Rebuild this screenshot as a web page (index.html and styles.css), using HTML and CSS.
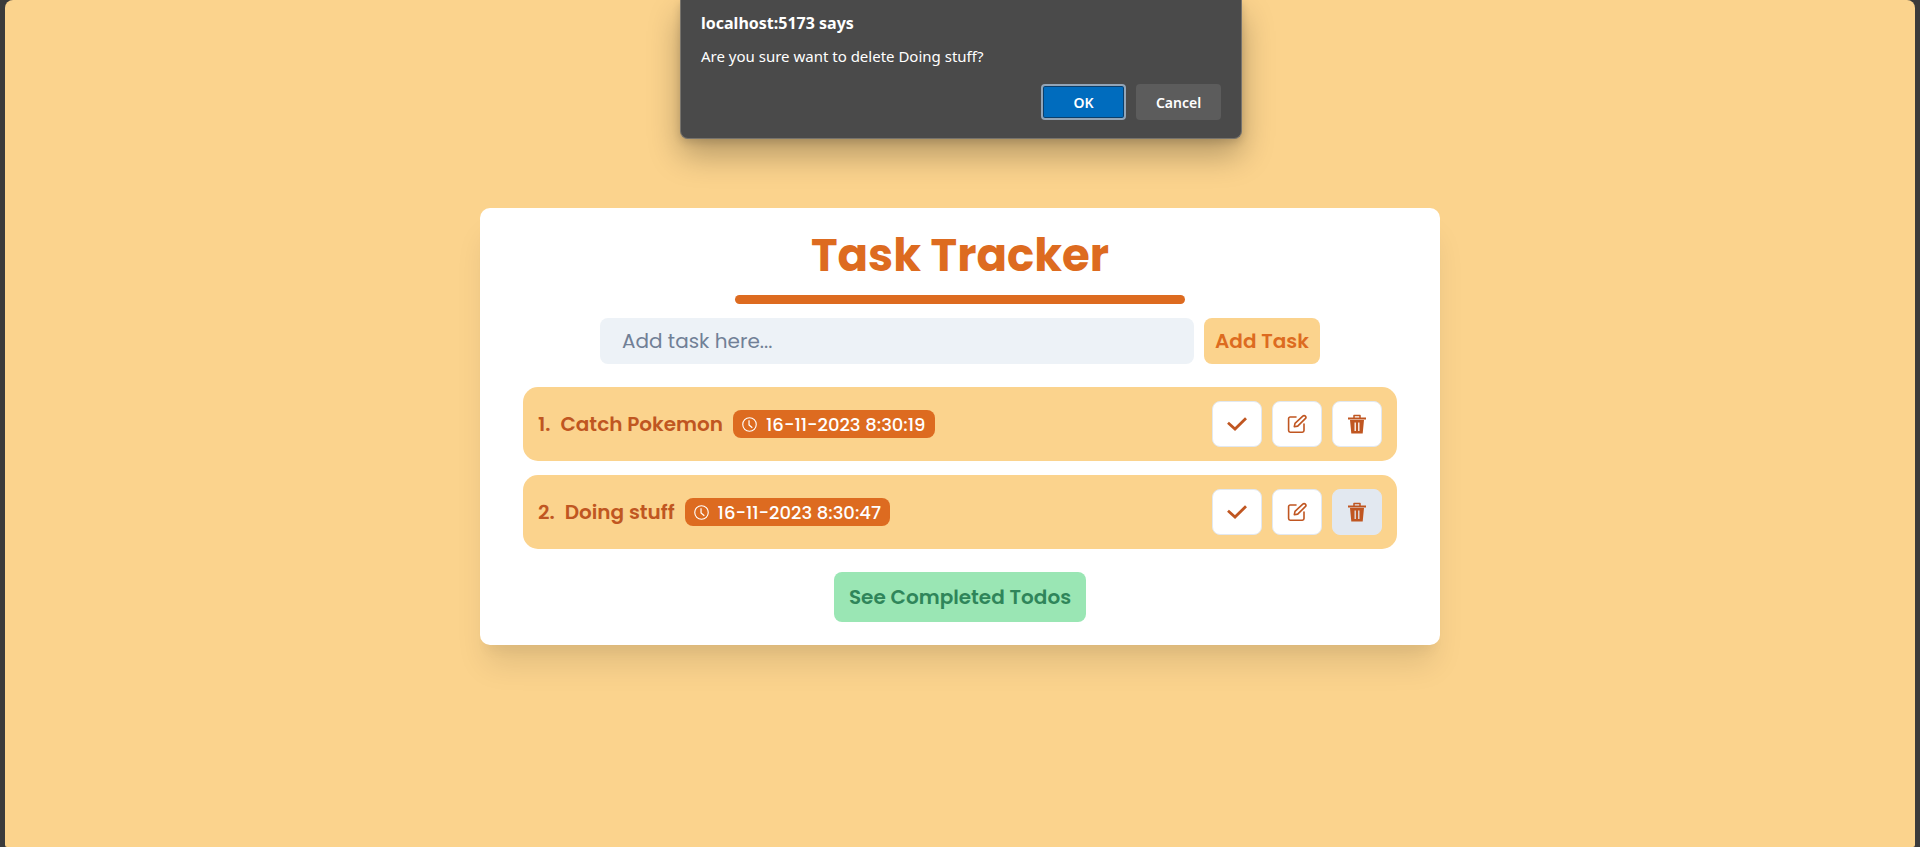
FILE: index.html
```html
<!DOCTYPE html>
<html lang="en">
<head>
<meta charset="utf-8">
<meta name="viewport" content="width=device-width, initial-scale=1">
<title>Task Tracker</title>
<link rel="stylesheet" href="styles.css">
</head>
<body>
<svg class="sprite" aria-hidden="true">
  <symbol id="check" viewBox="0 0 20 20"><path d="M1 8.800 8 15 19 4.300" fill="none" stroke="currentColor" stroke-width="2.800"/></symbol>
  <symbol id="edit" viewBox="0 0 20 20"><path d="M9 3H3.200a1.600 1.600 0 0 0-1.600 1.600V16.600a1.600 1.600 0 0 0 1.600 1.600H15.400a1.600 1.600 0 0 0 1.600-1.600V10M7.300 12.700l.7-3.400 7.800-7.200a1.800 1.800 0 0 1 2.500 2.600l-7.600 7.400Z" fill="none" stroke="currentColor" stroke-width="1.600" stroke-linejoin="round" stroke-linecap="round"/></symbol>
  <symbol id="trash" viewBox="0 0 20 20"><path d="M1 3.500h18v2H1zM3 6h14l-1.300 13.500H4.300z" fill="currentColor"/><path d="M7 4V1.500h6V4" fill="none" stroke="currentColor" stroke-width="1.500" stroke-linejoin="round"/><path d="M8.200 8.500V17M11.800 8.500V17" stroke="var(--hole)" stroke-width="1.300"/></symbol>
  <symbol id="clock" viewBox="0 0 16 16"><circle cx="8" cy="8" r="7.200" fill="none" stroke="currentColor" stroke-width="1.200"/><path d="M7.500 3.500V8.500L11 11.500" fill="none" stroke="currentColor" stroke-width="1.300"/></symbol>
</svg>
<div class="page">
  <main class="card">
    <h1 class="title">Task Tracker</h1>
    <div class="rule"></div>
    <form class="form">
      <input class="field" type="text" placeholder="Add task here..." aria-label="New task">
      <button class="add" type="button">Add Task</button>
    </form>
    <ul class="tasks">
      <li class="task">
        <span class="number">1.</span>
        <span class="name">Catch Pokemon</span>
        <time class="stamp"><svg class="clock"><use href="#clock"/></svg>16-11-2023 8:30:19</time>
        <div class="actions">
          <button class="action" type="button" aria-label="Complete Catch Pokemon"><svg class="icon"><use href="#check"/></svg></button>
          <button class="action" type="button" aria-label="Edit Catch Pokemon"><svg class="icon"><use href="#edit"/></svg></button>
          <button class="action" type="button" aria-label="Delete Catch Pokemon"><svg class="icon"><use href="#trash"/></svg></button>
        </div>
      </li>
      <li class="task">
        <span class="number">2.</span>
        <span class="name">Doing stuff</span>
        <time class="stamp"><svg class="clock"><use href="#clock"/></svg>16-11-2023 8:30:47</time>
        <div class="actions">
          <button class="action" type="button" aria-label="Complete Doing stuff"><svg class="icon"><use href="#check"/></svg></button>
          <button class="action" type="button" aria-label="Edit Doing stuff"><svg class="icon"><use href="#edit"/></svg></button>
          <button class="action active" type="button" aria-label="Delete Doing stuff"><svg class="icon"><use href="#trash"/></svg></button>
        </div>
      </li>
    </ul>
    <button class="completed" type="button">See Completed Todos</button>
  </main>
</div>
<div class="dialog" role="alertdialog" aria-labelledby="dialog-title" aria-describedby="dialog-text">
  <h2 class="dialog-title" id="dialog-title">localhost:5173 says</h2>
  <p class="dialog-text" id="dialog-text">Are you sure want to delete Doing stuff?</p>
  <div class="dialog-actions">
    <button class="dialog-button primary" type="button">OK</button>
    <button class="dialog-button" type="button">Cancel</button>
  </div>
</div>
</body>
</html>
```

FILE: styles.css
```css
* { box-sizing: border-box; }

body {
  margin: 0;
  padding: 0 5px;
  background: #3b3b3b;
  font-family: Poppins, Inter, sans-serif;
  font-size: 20px;
}

button, input { font: inherit; border: 0; margin: 0; padding: 0; }
.sprite { position: absolute; width: 0; height: 0; }

.page {
  display: flex;
  justify-content: center;
  align-items: flex-start;
  min-height: 100vh;
  padding: 208px 0 20px;
  background: #fbd38d;
  border-radius: 8px 8px 2px 2px;
}

.card {
  display: flex;
  flex-direction: column;
  align-items: center;
  width: 50vw;
  min-width: 800px;
  padding: 21px 43px 23px;
  background: #fff;
  border-radius: 10px;
  box-shadow: 0 25px 31px -6px rgba(0, 0, 0, .1), 0 12px 12px -6px rgba(0, 0, 0, .04);
}

.title { margin: 0; color: #dd6b20; font-size: 45px; line-height: 54px; font-weight: 700; }
.rule { width: 450px; height: 9px; margin: 12px 0 14px; border-radius: 5px; background: #dd6b20; }

.form { display: flex; gap: 10px; width: 720px; height: 46px; }
.field {
  flex: 1;
  min-width: 0;
  padding: 0 22px;
  border-radius: 8px;
  background: #edf2f7;
  color: #2d3748;
}
.field::placeholder { color: #718096; opacity: 1; }
.add { width: 116px; border-radius: 8px; background: #fbd38d; color: #dd6b20; font-weight: 600; }

.tasks {
  display: flex;
  flex-direction: column;
  gap: 14px;
  width: 100%;
  margin: 23px 0;
  padding: 0;
  list-style: none;
}
.task {
  display: flex;
  align-items: center;
  gap: 10px;
  padding: 14px 15px;
  border-radius: 15px;
  background: #fbd38d;
  color: #c05621;
  font-weight: 600;
}
.stamp {
  display: flex;
  align-items: center;
  gap: 9px;
  height: 28px;
  padding: 0 9px;
  border-radius: 8px;
  background: #dd6b20;
  color: #fff;
  font-size: 18px;
  font-weight: 500;
}
.clock { width: 15px; height: 15px; }
.actions { display: flex; gap: 10px; margin-left: auto; }
.action {
  --hole: #fff;
  display: grid;
  place-items: center;
  width: 50px;
  height: 46px;
  border: 1px solid #e2e8f0;
  border-radius: 8px;
  background: #fff;
  color: #c05621;
}
.action.active { --hole: #e2e8f0; background: #e2e8f0; }
.icon { width: 20px; height: 20px; }

.completed {
  padding: 0 15px;
  height: 50px;
  border-radius: 8px;
  background: #9ae6b4;
  color: #2f855a;
  font-weight: 600;
}

.dialog {
  position: absolute;
  top: 0;
  left: 50%;
  width: 562px;
  margin-left: -280px;
  padding: 11px 20px 18px;
  border: 1px solid #77736c;
  border-top: 0;
  border-radius: 0 0 8px 8px;
  background: #4a4a4a;
  color: #fff;
  font-family: "Segoe UI", "Noto Sans", sans-serif;
  font-size: 15px;
  box-shadow: 0 16px 32px rgba(0, 0, 0, .28), 0 3px 8px rgba(0, 0, 0, .14);
}
.dialog-title { margin: 0; font-size: 16px; line-height: 24px; font-weight: 700; }
.dialog-text { margin: 10px 0 16px; line-height: 23px; }
.dialog-actions { display: flex; justify-content: flex-end; gap: 10px; }
.dialog-button {
  width: 85px;
  height: 36px;
  border-radius: 4px;
  background: #5c5c5c;
  color: #fff;
  font-size: 14px;
  font-weight: 600;
}
.dialog-button.primary {
  border: 2px solid #93a5b7;
  background: #006cbe;
  box-shadow: inset 0 0 0 1px #0b3f6b;
}
```
